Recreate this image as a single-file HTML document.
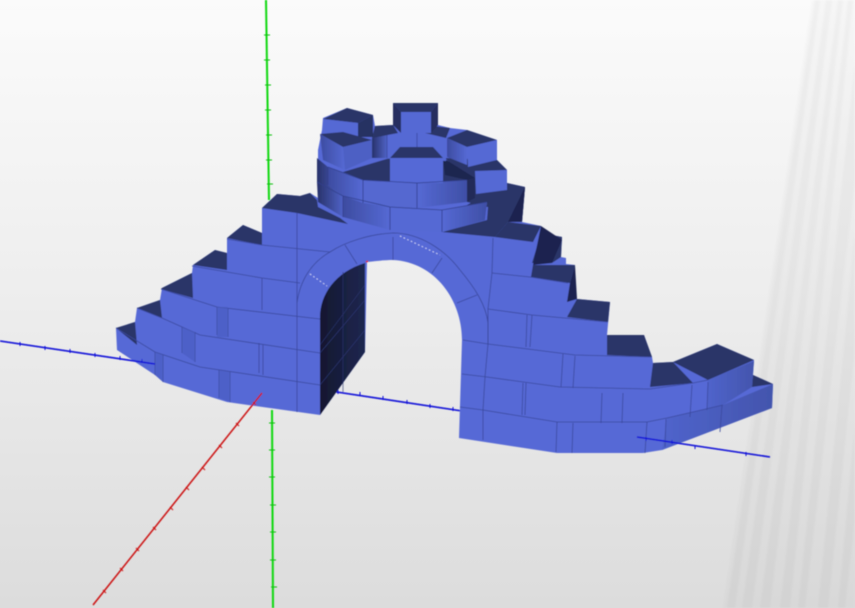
<!DOCTYPE html>
<html><head><meta charset="utf-8"><style>html,body{margin:0;padding:0;width:855px;height:608px;overflow:hidden;background:#e8e8e8}svg{display:block}</style></head><body>
<svg width="855" height="608" viewBox="0 0 855 608" xmlns="http://www.w3.org/2000/svg">
<defs>
<linearGradient id="bg" x1="0" y1="0" x2="0" y2="1"><stop offset="0" stop-color="#fbfbfb"/><stop offset=".5" stop-color="#ededed"/><stop offset="1" stop-color="#dcdcdc"/></linearGradient>
<linearGradient id="dr" x1="0" y1="0" x2="1" y2="0"><stop offset="0" stop-color="#5064cc"/><stop offset="1" stop-color="#4355ad"/></linearGradient>
<linearGradient id="cl" x1="0" y1="0" x2="1" y2="0"><stop offset="0" stop-color="#28326a"/><stop offset="1" stop-color="#4f62c6"/></linearGradient>
<linearGradient id="cl2" x1="0" y1="0" x2="1" y2="0"><stop offset="0" stop-color="#3d4ca0"/><stop offset="1" stop-color="#5569d4"/></linearGradient>
<linearGradient id="cr" x1="0" y1="0" x2="1" y2="0"><stop offset="0" stop-color="#5569d4"/><stop offset="1" stop-color="#3f4fa6"/></linearGradient>
<linearGradient id="wall" x1="0" y1="0" x2="1" y2="0"><stop offset="0" stop-color="#12172f"/><stop offset="1" stop-color="#1f2750"/></linearGradient>
<filter id="b" x="-2%" y="-2%" width="104%" height="104%"><feGaussianBlur stdDeviation="0.6"/></filter>
<filter id="b2" x="-5%" y="-5%" width="110%" height="110%"><feGaussianBlur stdDeviation="1"/></filter>
</defs>
<rect width="855" height="608" fill="url(#bg)"/>
<g fill="#000" filter="url(#b2)">
<path opacity=".02" d="M812 0H855V608H723Z"/>
<g opacity=".025">
<path d="M815 0H820L735 608H727Z"/><path d="M826 0H832L752 608H742Z"/><path d="M838 0H843L770 608H760Z"/><path d="M848 0H853L790 608H780Z"/><path d="M855 60V180L805 608H798Z"/><path d="M855 230V350L828 608H818Z"/><path d="M855 420V520L845 608H838Z"/>
</g>
</g>
<g filter="url(#b)">
<!-- axes behind -->
<path d="M266 0L269 200" stroke="#10d810" stroke-width="2" fill="none"/>
<path d="M272 410L273 608" stroke="#10d810" stroke-width="2" fill="none"/>
<path d="M264 35h6M264 60h6M265 85h6M265 110h6M266 135h6M266 160h6M267 184h6M269 423h6M269 450h6M269 477h6M270 505h6M270 532h6M270 560h6M271 587h6" stroke="#10c010" stroke-width="1"/>
<path d="M330 391L462 411" stroke="#0808d8" stroke-width="1.6" fill="none"/>
<path d="M338 390v4M360 392v4M383 396v4M407 400v4M430 404v4M453 407v4" stroke="#0808d8" stroke-width="1"/>
<!-- silhouette -->
<path fill="#5669d6" d="M116 328L135 322L137 308L160 300L162 288L192 273L193 265L215 250L227 253L227 238L243 225L262 233L262 208L277 194L300 196L310 193L318 198L318 150L322 130L323 118L347 108L373 115L375 126L393 125L393 103L438 103L438 125L450 128L467 130L497 140L497 160L507 170L507 183L525 187L522 222L541 226L541 233L562 237L561 257L566 258L566 264L575 265L570 295L577 299L610 302L607 335L644 335L652 357L653 363L673 362L717 344L754 360L753 375L773 384L772 408L662 450L643 453L557 453L459 438L462 340C462 300 435 262 393 260C385 260 375 261 367 262L365 352L320 415L227 402L163 382L155 375L117 350Z"/>
<!-- hole wall dark -->
<path fill="url(#wall)" d="M320 317C320 295 335 272 365 263L365 352L320 415Z"/>
<path d="M320 353L365 300M320 385L365 330M320 345L365 285M343 272V392" stroke="#2c3670" stroke-width=".6" fill="none"/>
<!-- left tops -->
<g fill="#2a3568">
<path d="M116 328L135 322L137 345Z"/><path d="M137 308L160 300L162 318Z"/><path d="M162 288L192 273L193 298L161 289Z"/><path d="M193 265L215 250L227 253V270Z"/><path d="M227 238L243 225L262 233V245Z"/>
<path d="M262 208L277 194L300 196L310 193L317 200L318 207L340 218L348 224L297 213Z"/>
</g>
<!-- left row seams -->
<g fill="none" stroke="#3a489c" stroke-width=".8">
<path d="M116 328L155 352L200 367L320 385"/><path d="M137 308L162 318L200 335L320 353"/><path d="M161 289L217 307L320 319"/><path d="M192 266L262 278L300 283"/><path d="M227 239L262 245L330 252"/>
<path d="M297 213V412"/><path d="M262 278V310M228 308V337M217 307V335M182 327V353M195 332V362M259 343V373M263 345V375M155 352V375M163 355V382M219 370V398M230 372V402"/>
<path d="M297 303C300 280 312 262 330 252C345 242 370 234 393 233C420 233 445 250 460 270C475 288 486 305 488 323V344"/>
<path d="M345 245L357 264M393 237V260M442 258L432 273M477 295L457 303"/>
</g>
<path d="M310 274L327 286M400 236L440 255" stroke="#e4e8ff" stroke-width=".8" stroke-dasharray="1.5 2.5" fill="none"/>
<g fill="#4a5cc0" opacity=".6"><path d="M217 307h11v30h-11z"/><path d="M182 327l13 5v30l-13-9z"/><path d="M155 352l8 3v27l-8-7z"/><path d="M219 370l11 2v30l-11-4z"/></g>
<!-- right tops & dark -->
<g fill="#2a3568">
<path d="M607 335L644 335L652 357L607 355Z"/><path d="M567 317L577 299L610 302L608 322Z"/>
<path d="M533 265L575 265L570 283L531 277Z"/><path d="M541 233L562 237L561 257L552 263L532 263L539 240Z"/>
<path d="M495 237L508 222L541 226L533 242Z"/><path d="M650 387L653 363L673 362L693 383Z"/><path d="M673 362L717 344L754 360L708 380Z"/><path d="M752 387L753 375L773 384Z"/>
<path d="M507 183L525 187L522 222L508 222L495 237L442 232L487 220L488 207L467 205Z"/>
<path d="M445 158L497 160L507 170L507 183L488 207L467 202L467 180Z"/>
</g>
<path fill="#1d2450" d="M525 187L522 222L508 222ZM541 226L533 265L552 263L562 240ZM575 265L570 283L567 302L577 299Z"/>
<path fill="url(#dr)" d="M708 380L754 361L752 387L723 405L707 410Z"/>
<path fill="url(#dr)" d="M667 418L723 405L773 384L772 408L662 450Z"/>
<!-- right seams -->
<g fill="none" stroke="#3a489c" stroke-width=".8">
<path d="M460 407L483 410L557 422L647 422L667 418L723 405"/><path d="M462 374L487 377L560 387L650 389L693 383L708 380"/><path d="M463 340L488 344L575 355L652 357"/><path d="M488 309L532 315L608 322"/><path d="M492 273L530 277L568 283"/>
<path d="M483 410V440M557 422L556 452M573 423L572 453M647 422L645 453M666 419L665 447M722 405L720 432"/>
<path d="M485 377L483 410M523 383L522 415M526 383L525 415M602 393L601 423M623 393L622 423M692 385L690 417M708 382L707 410"/>
<path d="M563 354L561 387M575 356L573 388M488 344L485 377M527 315L526 347M532 315L530 347M488 309V344M492 273L488 309M493 238L492 273"/>
</g>
<!-- tower lower ring -->
<path fill="#5569d4" d="M390 207L442 210L487 202L485 220L442 232L390 230Z"/>
<path fill="url(#cr)" d="M442 210L487 202L485 220L442 232Z"/>
<path fill="url(#cl2)" d="M343 196L390 207V230L343 217Z"/>
<path fill="url(#cl)" d="M317 182L343 196V217L318 202Z"/>
<!-- upper ring -->
<path fill="url(#cl)" d="M317 158L328 167V185L343 196L317 182Z"/>
<path fill="url(#cl2)" d="M328 167L363 180V203L343 196L328 185Z"/>
<path fill="#5468d0" d="M363 180L417 183V208L390 207L363 203Z"/>
<path fill="url(#cr)" d="M417 183L467 180L467 202L417 208Z"/>
<path fill="#222b58" d="M467 180L475 178L475 198L467 202Z"/>
<!-- dark floor -->
<path fill="#2a3568" d="M343 172L390 158L443 158L475 178L467 180L417 183L363 180Z"/>
<path fill="#1f2750" d="M443 158L475 178L467 180L445 175Z"/>
<!-- back ring -->
<path fill="#5569d4" d="M372 138L387 134L417 133L446 138V161L372 158Z"/>
<path fill="url(#cl)" d="M372 138L387 134V158L372 158Z"/>
<path d="M417 133V158M387 134V158" stroke="#3a489c" stroke-width=".8" fill="none"/>
<path fill="#2a3568" d="M375 126L393 125L398 133L372 138ZM432 126L450 128L446 138L425 133Z"/>
<!-- back block -->
<path fill="#2a3568" d="M393 103L438 103L431 112H401Z"/>
<path fill="#252d5e" d="M393 103L401 112V133L393 125ZM438 103V125L431 133V112Z"/>
<path fill="#5569d4" d="M401 112H431V133H401Z"/>
<!-- left upper block -->
<path fill="#2a3568" d="M323 119L347 108L373 115L358 123Z"/>
<path fill="#5569d4" d="M323 119L358 123V134L323 133Z"/>
<path fill="#283262" d="M358 123L373 115V137L358 137Z"/>
<!-- left block 2 -->
<path fill="#2a3568" d="M320 134L343 132L372 140L343 147Z"/>
<path fill="url(#cl2)" d="M320 134L343 147L345 170L323 160Z"/>
<path fill="#4e60c4" d="M343 147L372 140V158L345 170Z"/>
<!-- right block -->
<path fill="#2a3568" d="M447 138L467 130L497 140L467 147Z"/>
<path fill="url(#cl2)" d="M447 138L467 147V165L447 157Z"/>
<path fill="#5569d4" d="M467 147L497 140V160L468 167Z"/>
<!-- right small block -->
<path fill="#2a3568" d="M470 167L487 163L507 170L475 171Z"/>
<path fill="#5569d4" d="M475 171L507 170V190L476 194Z"/>
<!-- front block -->
<path fill="#2a3568" d="M400 147H433L443 158H390Z"/>
<path fill="#5569d6" d="M390 158H443V183H390Z"/>
<!-- tower seams -->
<g fill="none" stroke="#323f8c" stroke-width=".8">
<path d="M328 167L363 180L417 183L467 180"/><path d="M317 182L343 196L390 207L442 210L487 202"/>
<path d="M417 183V208M363 180V203M343 196V217M390 207V230M442 210V232M328 167V185"/>
</g>
<!-- axes front -->
<path d="M0 341L155 364" stroke="#0808d8" stroke-width="1.6" fill="none"/>
<path d="M20 342v4M45 346v4M70 349v4M95 353v4M120 356v4M142 359v4" stroke="#0808d8" stroke-width="1"/>
<path d="M637 437L770 457" stroke="#0808d8" stroke-width="1.6" fill="none"/>
<path d="M646 437v4M672 440v4M695 445v4M746 452v4" stroke="#0808d8" stroke-width="1"/>
<path d="M262 393L93 605" stroke="#cc1010" stroke-width="1.5" fill="none"/>
<path d="M253 402l3 3M236 423l3 3M219 445l3 3M202 467l3 3M186 487l3 3M170 507l3 3M153 527l3 3M136 548l3 3M120 568l3 3M103 590l3 3" stroke="#cc1010" stroke-width="1"/>
<path d="M366 262l2-1" stroke="#d81818" stroke-width="1.4"/>
</g>
</svg>
</body></html>
